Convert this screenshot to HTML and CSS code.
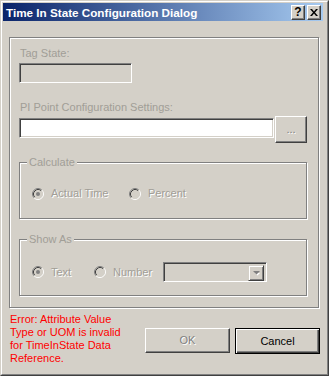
FILE: index.html
```html
<!DOCTYPE html>
<html>
<head>
<meta charset="utf-8">
<link rel="stylesheet" href="styles.css">
</head>
<body>
<div class="window">
  <div class="frame">
    <div class="titlebar">
      <span class="title">Time In State Configuration Dialog</span>
      <div class="tbtns">
        <span class="tbtn help">?</span>
        <span class="tbtn close"><svg width="8" height="7" viewBox="0 0 8 7"><path d="M0 0h2l2 2.5L6 0h2L5 3.5 8 7H6L4 4.5 2 7H0l3-3.5z" fill="#000"/></svg></span>
      </div>
    </div>
    <div class="body">
      <div class="panel">
        <div class="lbl">Tag State:</div>
        <div class="field tag"></div>
        <div class="lbl pi">PI Point Configuration Settings:</div>
        <div class="pirow">
          <div class="field piinput"></div>
          <div class="btn dots">...</div>
        </div>
        <fieldset class="group calc">
          <legend>Calculate</legend>
          <div class="radios">
            <div class="radio w1">
              <svg width="12" height="12" viewBox="0 0 12 12"><circle cx="6" cy="6" r="4.5" fill="#d4d0c8"/><path d="M2.11 9.89A5.5 5.5 0 0 1 9.89 2.11" fill="none" stroke="#808080"/><path d="M9.89 2.11A5.5 5.5 0 0 1 2.11 9.89" fill="none" stroke="#fff"/><path d="M2.82 9.18A4.5 4.5 0 0 1 9.18 2.82" fill="none" stroke="#404040"/><path d="M9.18 2.82A4.5 4.5 0 0 1 2.82 9.18" fill="none" stroke="#d4d0c8"/><circle cx="6" cy="6" r="2" fill="#808080"/></svg>
              <span class="rtext">Actual Time</span>
            </div>
            <div class="radio">
              <svg width="12" height="12" viewBox="0 0 12 12"><circle cx="6" cy="6" r="4.5" fill="#d4d0c8"/><path d="M2.11 9.89A5.5 5.5 0 0 1 9.89 2.11" fill="none" stroke="#808080"/><path d="M9.89 2.11A5.5 5.5 0 0 1 2.11 9.89" fill="none" stroke="#fff"/><path d="M2.82 9.18A4.5 4.5 0 0 1 9.18 2.82" fill="none" stroke="#404040"/><path d="M9.18 2.82A4.5 4.5 0 0 1 2.82 9.18" fill="none" stroke="#d4d0c8"/></svg>
              <span class="rtext">Percent</span>
            </div>
          </div>
        </fieldset>
        <fieldset class="group show">
          <legend>Show As</legend>
          <div class="radios rows2">
            <div class="radio w3">
              <svg width="12" height="12" viewBox="0 0 12 12"><circle cx="6" cy="6" r="4.5" fill="#d4d0c8"/><path d="M2.11 9.89A5.5 5.5 0 0 1 9.89 2.11" fill="none" stroke="#808080"/><path d="M9.89 2.11A5.5 5.5 0 0 1 2.11 9.89" fill="none" stroke="#fff"/><path d="M2.82 9.18A4.5 4.5 0 0 1 9.18 2.82" fill="none" stroke="#404040"/><path d="M9.18 2.82A4.5 4.5 0 0 1 2.82 9.18" fill="none" stroke="#d4d0c8"/><circle cx="6" cy="6" r="2" fill="#808080"/></svg>
              <span class="rtext">Text</span>
            </div>
            <div class="radio w4">
              <svg width="12" height="12" viewBox="0 0 12 12"><circle cx="6" cy="6" r="4.5" fill="#d4d0c8"/><path d="M2.11 9.89A5.5 5.5 0 0 1 9.89 2.11" fill="none" stroke="#808080"/><path d="M9.89 2.11A5.5 5.5 0 0 1 2.11 9.89" fill="none" stroke="#fff"/><path d="M2.82 9.18A4.5 4.5 0 0 1 9.18 2.82" fill="none" stroke="#404040"/><path d="M9.18 2.82A4.5 4.5 0 0 1 2.82 9.18" fill="none" stroke="#d4d0c8"/></svg>
              <span class="rtext">Number</span>
            </div>
            <div class="field combo">
              <div class="btn drop"><svg width="7" height="5" viewBox="0 0 7 5"><path d="M1 1h5L3.5 3.5z" fill="#fff" transform="translate(1 1)"/><path d="M0 0h7L3.5 3.5z" fill="#808080"/></svg></div>
            </div>
          </div>
        </fieldset>
      </div>
      <div class="footer">
        <p class="error">Error: Attribute Value<br>Type or UOM is invalid<br>for TimeInState Data<br>Reference.</p>
        <div class="actions">
          <button class="btn ok">OK</button>
          <button class="btn cancel">Cancel</button>
        </div>
      </div>
    </div>
  </div>
</div>
</body>
</html>
```
FILE: styles.css
```css
html, body {
  margin: 0;
  background: #d4d0c8;
}
body {
  font: 11px/13px "Liberation Sans", Arial, sans-serif;
}
.window {
  width: 329px;
  height: 376px;
  box-sizing: border-box;
  border: 1px solid;
  border-color: #d4d0c8 #404040 #404040 #d4d0c8;
}
.frame {
  height: 100%;
  box-sizing: border-box;
  border: 1px solid;
  border-color: #fff #808080 #808080 #fff;
  padding: 1px;
  display: flex;
  flex-direction: column;
  background: #d4d0c8;
}
.titlebar {
  height: 18px;
  margin-right: 3px;
  background: linear-gradient(to right, #0a246a, #a6caf0);
  display: flex;
  align-items: center;
  justify-content: space-between;
  padding: 0 2px 0 3px;
}
.title {
  color: #fff;
  font-weight: bold;
  font-size: 11.7px;
}
.tbtns {
  display: flex;
  gap: 2px;
}
.tbtn {
  width: 14px;
  height: 15px;
  box-sizing: border-box;
  border: 1px solid;
  border-color: #fff #404040 #404040 #fff;
  box-shadow: inset -1px -1px 0 #808080;
  background: #d4d0c8;
  display: flex;
  align-items: center;
  justify-content: center;
  font-weight: bold;
  font-size: 12px;
  color: #000;
}
.body {
  flex: 1;
  display: flex;
  flex-direction: column;
}
.panel {
  margin: 16px 0 0 6px;
  width: 310px;
  height: 271px;
  box-sizing: border-box;
  border: 1px solid #808080;
  box-shadow: 1px 1px 0 #fff, inset 1px 1px 0 #fff;
  padding-left: 9px;
  display: flex;
  flex-direction: column;
  align-items: flex-start;
}
.lbl {
  color: #a19e97;
  margin-top: 9px;
  padding-left: 1px;
}
.lbl.pi {
  margin-top: 18px;
}
.field {
  box-sizing: border-box;
  border: 1px solid;
  border-color: #808080 #fff #fff #808080;
  box-shadow: inset 1px 1px 0 #404040, inset -1px -1px 0 #d4d0c8;
  height: 20px;
}
.tag {
  width: 113px;
  margin-top: 3px;
  background: #d4d0c8;
}
.pirow {
  display: flex;
  align-items: flex-start;
  margin-top: 2px;
}
.piinput {
  width: 255px;
  margin-top: 2px;
  background: #fff;
}
.btn {
  box-sizing: border-box;
  border: 1px solid;
  border-color: #fff #404040 #404040 #fff;
  box-shadow: inset -1px -1px 0 #808080;
  background: #d4d0c8;
  font: inherit;
  padding: 0;
  display: flex;
  align-items: center;
  justify-content: center;
}
.dots {
  width: 32px;
  height: 27px;
  margin-left: 1px;
  color: #808080;
  text-shadow: 1px 1px 0 #fff;
}
.group {
  margin: 13px 0 0 0;
  padding: 0;
  width: 288px;
  height: 63px;
  box-sizing: border-box;
  border: 1px solid #808080;
  box-shadow: 1px 1px 0 #fff, inset 1px 1px 0 #fff;
  min-width: 0;
}
.group.show {
  margin-top: 14px;
}
.group legend {
  margin-left: 7px;
  padding: 0 2px;
  background: #d4d0c8;
  color: #a19e97;
}
.radios {
  display: flex;
  align-items: center;
  padding: 18px 0 0 12px;
}
.radios.rows2 {
  padding-top: 16px;
}
.radio {
  display: flex;
  align-items: center;
  gap: 7px;
}
.radio svg {
  display: block;
}
.rtext {
  color: #a19e97;
  text-shadow: 1px 1px 0 #fff;
}
.w1 { width: 97px; }
.w3 { width: 62px; }
.w4 { width: 69px; }
.combo {
  width: 104px;
  background: #d4d0c8;
  display: flex;
  justify-content: flex-end;
  padding: 2px;
}
.drop {
  width: 16px;
  height: 16px;
  border-color: #d4d0c8 #404040 #404040 #d4d0c8;
  box-shadow: inset 1px 1px 0 #fff, inset -1px -1px 0 #808080;
}
.footer {
  display: flex;
  justify-content: space-between;
  align-items: flex-start;
}
.error {
  margin: 5px 0 0 7px;
  color: #ff0000;
}
.actions {
  display: flex;
  gap: 5px;
  margin: 20px 6px 0 0;
}
.ok {
  width: 85px;
  height: 25px;
  color: #808080;
  text-shadow: 1px 1px 0 #fff;
  box-shadow: inset -1px -1px 0 #808080, inset 1px 1px 0 #d4d0c8;
}
.cancel {
  width: 85px;
  height: 26px;
  color: #000;
  border-color: #000;
  box-shadow: inset 1px 1px 0 #fff, inset -1px -1px 0 #404040, inset -2px -2px 0 #808080;
}
```
